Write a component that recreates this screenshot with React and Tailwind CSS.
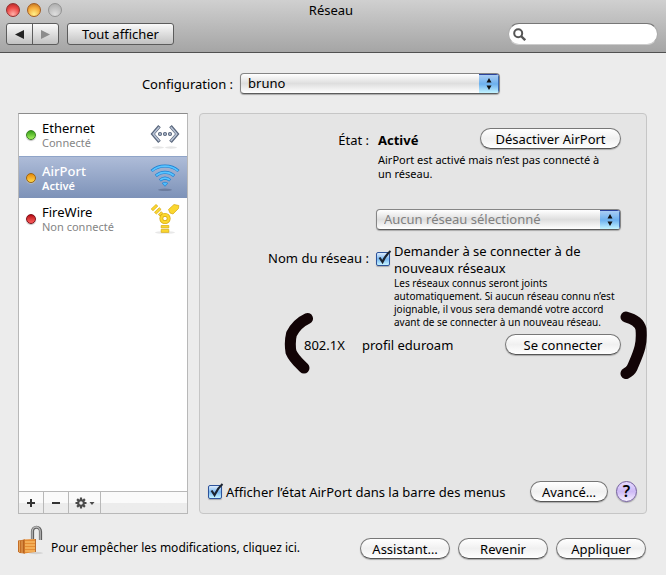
import React, { useState } from "react";
import clsx from "clsx";

const EthernetIcon = () => (
    <svg className="w-[30px] h-[30px] shrink-0" viewBox="0 0 30 30" fill="none">
        <ellipse cx="8" cy="27.500" rx="6" ry="1.200" fill="#e6e6e6" />
        <ellipse cx="21" cy="27.500" rx="6" ry="1.200" fill="#e6e6e6" />
        <g stroke="#59667c" strokeWidth="3.400">
            <path d="M9.500 6.200 2.800 14l6.700 7.800" />
            <path d="M20.500 6.200 27.200 14l-6.700 7.800" />
        </g>
        <g stroke="#b9c4d6" strokeWidth="1.500">
            <path d="M9.200 7 3.200 14l6 7" />
            <path d="M20.800 7 26.800 14l-6 7" />
        </g>
        <g fill="#b9c4d6" stroke="#59667c" strokeWidth="1.100">
            <circle cx="10" cy="14" r="1.500" />
            <circle cx="15" cy="14" r="1.500" />
            <circle cx="20" cy="14" r="1.500" />
        </g>
    </svg>
);

const AirPortIcon = () => (
    <svg className="w-[30px] h-[30px] shrink-0" viewBox="0 0 30 30" fill="none">
        <ellipse cx="15" cy="26.800" rx="7" ry="1.300" fill="#6c7d9f" />
        <g stroke="#1b7fd2" strokeWidth="3">
            <path d="M1.500 8C9 1.300 21 1.300 28.500 8" />
            <path d="M5.800 12.800c5.400-4.700 13-4.700 18.400 0" />
            <path d="M9.800 17.300c3.200-2.700 7.200-2.700 10.400 0" />
        </g>
        <g stroke="#58c4ff" strokeWidth="1.700">
            <path d="M2 7.800C9.500 1.600 20.500 1.600 28 7.800" />
            <path d="M6.200 12.500c5.200-4.300 12.400-4.300 17.600 0" />
            <path d="M10.200 17c3-2.400 6.600-2.400 9.600 0" />
        </g>
        <path d="M12.200 20.200c1.900-1.200 3.700-1.200 5.600 0L15 23.300z" fill="#4fbdfc" stroke="#1b7fd2" strokeWidth="0.700" />
    </svg>
);

const FireWireIcon = () => (
    <svg className="w-[30px] h-[32px] shrink-0" viewBox="0 0 30 32" fill="none">
        <ellipse cx="15" cy="29.500" rx="10" ry="1.300" fill="#e8e8e8" />
        <g fill="#fbd72f" stroke="#d6a80f" strokeWidth="0.700">
            <path d="m18.500 6.500 5.500-5 4.800 1L28.500 5.500 23 11l-3-1z" />
            <path d="M1.200 6 6 1.500l1.800 1.600L3 7.700z" />
            <path d="m4.500 9.300 4.800-4.600 1.800 1.700-4.800 4.600z" />
            <path d="m8.300 11.500 3-2.800 1.500 1.500-2.800 2.700z" />
            <path d="M11.200 22.500h7.600v2.400h-7.600z" />
            <path d="M11.200 26.400h7.600v3h-7.600z" />
        </g>
        <circle cx="15" cy="15.500" r="3.700" stroke="#d6a80f" strokeWidth="3.800" />
        <circle cx="15" cy="15.500" r="3.700" stroke="#fbd72f" strokeWidth="2.400" />
    </svg>
);

const LockIcon = () => (
    <svg className="w-7 h-[30px] shrink-0" viewBox="0 0 28 30" fill="none">
        <ellipse cx="18" cy="28" rx="7" ry="1.200" fill="#d3d3d3" />
        <path d="M14.500 14V6.500C14.500 .8 22.500 .8 22.500 6.500V15" stroke="#5f5f5f" strokeWidth="3.200" />
        <path d="M14.200 14V6.500C14.200 .5 22.200 .5 22.200 6.500V15" stroke="#b8b8b8" strokeWidth="1.300" />
        <path d="M0 15.500 7 14.500V28.500L1.500 28 0 26.500z" fill="#c46d25" />
        <path d="M1.500 16v11M4 15.500v12.500" stroke="#e6a45c" />
        <path d="M6 14.500 17.500 14v13L6 28.500z" fill="#e58c33" />
        <path d="M7 17h10M7 20h10M7 23h10M7 26h10" stroke="#f8b863" strokeWidth="1.300" />
        <path d="M6 14.500v14M17.500 14v13" stroke="#a8571a" strokeWidth="0.800" />
    </svg>
);

const GearIcon = () => (
    <svg className="w-[20px] h-3" viewBox="0 0 20 12">
        <g stroke="#4b4b4b" strokeWidth="2.200">
            <path d="M6 .5v11M.5 6h11M2.100 2.100l7.800 7.800M9.900 2.100 2.100 9.900" />
        </g>
        <circle cx="6" cy="6" r="3.800" fill="#4b4b4b" />
        <circle cx="6" cy="6" r="1.800" fill="#efefef" />
        <path d="M14.500 5h5L17 8z" fill="#4b4b4b" />
    </svg>
);

const services = [
    { name: "Ethernet", status: "Connecté", dot: "from-[#2d9e10] to-[#a4f35e] border-[#3b8022]", Icon: EthernetIcon },
    { name: "AirPort", status: "Activé", dot: "from-[#e88a00] to-[#ffd94a] border-[#9c6410]", Icon: AirPortIcon },
    { name: "FireWire", status: "Non connecté", dot: "from-[#b80012] to-[#ff5d5d] border-[#7d1018]", Icon: FireWireIcon },
];

const PillButton = ({ className, children }) => (
    <button
        type="button"
        className={clsx(
            "h-[21px] shrink-0 rounded-full border border-[#777] border-b-[#555] bg-linear-to-b from-white via-[#f0f0f0] to-white text-center leading-[18px] whitespace-nowrap shadow-[0_1px_1px_#aaa]",
            className
        )}
    >
        {children}
    </button>
);

const PopupSelect = ({ className, options, ...props }) => (
    <div className={clsx("relative h-[21px] overflow-hidden rounded-[4px] border border-[#858585] border-b-[#5c5c5c] bg-linear-to-b from-white via-[#dedede] to-white shadow-[0_1px_1px_#aaa]", className)}>
        <select className="block w-full h-full appearance-none pl-[7px] pr-6 leading-[19px] outline-none" {...props}>
            {options.map((option) => (
                <option key={option}>{option}</option>
            ))}
        </select>
        <span className="pointer-events-none absolute inset-y-0 right-0 flex w-5 items-center justify-center border-t border-r border-t-[#2b439c] border-r-[#3a66ad] bg-linear-to-b from-[#a9cdf3] via-[#6cb0ee] to-[#c4f4ff]">
            <svg className="w-[6px] h-3" viewBox="0 0 6 12">
                <path d="M3 0 5.500 4.500h-5zM3 12 .5 7.500h5z" fill="#111" />
            </svg>
        </span>
    </div>
);

const CheckBox = (props) => (
    <span className="relative block h-[14px] w-[14px] shrink-0">
        <input
            type="checkbox"
            defaultChecked
            className="peer block h-[14px] w-[14px] appearance-none rounded-[2px] border border-[#2d539b] bg-linear-to-b from-[#dcebfc] via-[#7ab8f0] to-[#c6f4ff] shadow-[0_1px_1px_#aaa]"
            {...props}
        />
        <svg className="pointer-events-none invisible absolute -top-[2px] left-0 h-4 w-4 peer-checked:visible" viewBox="0 0 16 16" fill="none">
            <path d="M3.500 7.500 6.500 12C8.500 7.500 11 4 14.500 1" stroke="#1c2430" strokeWidth="2.200" />
        </svg>
    </span>
);

const App = () => {
    const [selected, setSelected] = useState("AirPort");

    return (
        <div className="flex min-h-screen flex-col bg-[#ececec] font-['Lucida_Grande','Noto_Sans',sans-serif] text-[13px] leading-4 text-black">
            <header className="border-b border-[#515151] bg-linear-to-b from-[#d0d0d0] to-[#a5a5a5] px-[6px] pb-[7px]">
                <div className="grid h-[23px] grid-cols-[1fr_auto_1fr] items-center pr-1 pb-[3px]">
                    <div className="flex gap-[7px]">
                        <button type="button" aria-label="Fermer" className="h-[14px] w-[14px] rounded-full border border-[#913030] bg-[radial-gradient(circle_at_50%_85%,#ffb0a8,#ee4a48_55%,#a92222)]" />
                        <button type="button" aria-label="Réduire" className="h-[14px] w-[14px] rounded-full border border-[#a55d20] bg-[radial-gradient(circle_at_50%_85%,#fff08a,#f5ac3c_55%,#b86a1c)]" />
                        <button type="button" aria-label="Agrandir" className="h-[14px] w-[14px] rounded-full border border-[#929292] bg-[radial-gradient(circle_at_50%_85%,#dedede,#c0c0c0_55%,#a8a8a8)]" />
                    </div>
                    <h1>Réseau</h1>
                </div>
                <div className="flex h-[22px] items-stretch">
                    <div className="mr-2 flex w-[53px] rounded-[3px] border border-[#5c5c5c] bg-linear-to-b from-[#fafafa] to-[#c2c2c2]">
                        <button type="button" aria-label="Précédent" className="flex flex-1 items-center justify-center border-r border-[#5c5c5c]">
                            <svg className="h-[9px] w-[9px]" viewBox="0 0 9 9"><path d="M9 0v9L0 4.500z" fill="#222" /></svg>
                        </button>
                        <button type="button" aria-label="Suivant" className="flex flex-1 items-center justify-center">
                            <svg className="h-[9px] w-[9px]" viewBox="0 0 9 9"><path d="M0 0v9l9-4.500z" fill="#8c8c8c" /></svg>
                        </button>
                    </div>
                    <button type="button" className="w-[107px] rounded-[3px] border border-[#5c5c5c] bg-linear-to-b from-[#fafafa] to-[#c2c2c2] leading-5">
                        Tout afficher
                    </button>
                    <label className="mr-[2px] ml-auto flex w-[150px] items-center rounded-full border border-t-[#777] border-x-[#aaa] border-b-[#ccc] bg-white pl-1">
                        <svg className="h-[13px] w-[13px] shrink-0" viewBox="0 0 13 13" fill="none" stroke="#555" strokeWidth="2">
                            <circle cx="5.200" cy="5.200" r="4" />
                            <path d="m8 8 4.200 4.200" strokeWidth="2.400" />
                        </svg>
                        <input type="search" aria-label="Rechercher" className="w-full min-w-0 px-1 outline-none" />
                    </label>
                </div>
            </header>

            <main className="flex flex-1 flex-col pt-5 pr-[19px] pl-[18px]">
                <div className="flex items-center justify-center pr-[23px]">
                    <label htmlFor="location" className="mr-[7px]">Configuration :</label>
                    <PopupSelect id="location" className="w-[260px]" options={["bruno"]} />
                </div>

                <div className="mt-[19px] flex flex-1 gap-[11px]">
                    <aside className="flex w-[170px] shrink-0 flex-col border border-[#b8b8b8] border-t-[#8c8c8c] bg-white">
                        <ul className="flex-1">
                            {services.map(({ name, status, dot, Icon }) => (
                                <li key={name}>
                                    <button
                                        type="button"
                                        onClick={() => setSelected(name)}
                                        className={clsx(
                                            "flex h-[42px] w-full items-center pr-[7px] pl-[7px] text-left",
                                            selected === name && "border-t border-[#8fa4c8] bg-linear-to-b from-[#aebcd8] to-[#7d92b8] text-white"
                                        )}
                                    >
                                        <span className={clsx("h-[10px] w-[10px] shrink-0 rounded-full border bg-linear-to-b shadow-[0_1px_1px_#bbb]", dot)} />
                                        <span className="ml-[6px] flex-1">
                                            <span className={clsx("block leading-4", selected === name && "font-medium")}>{name}</span>
                                            <span className={clsx("block text-[11px] leading-[14px]", selected === name ? "font-semibold" : "text-[#858585]")}>{status}</span>
                                        </span>
                                        <Icon />
                                    </button>
                                </li>
                            ))}
                        </ul>
                        <div className="flex h-[22px] border-t border-[#b8b8b8] bg-linear-to-b from-[#fafafa] from-50% to-[#ececec] to-50%">
                            <button type="button" aria-label="Ajouter" className="flex w-[25px] items-center justify-center border-r border-[#b8b8b8]">
                                <svg className="h-2 w-2" viewBox="0 0 8 8"><path d="M4 0v8M0 4h8" stroke="#333" strokeWidth="2" /></svg>
                            </button>
                            <button type="button" aria-label="Supprimer" className="flex w-[25px] items-center justify-center border-r border-[#b8b8b8]">
                                <svg className="h-2 w-2" viewBox="0 0 8 8"><path d="M0 4h8" stroke="#333" strokeWidth="2" /></svg>
                            </button>
                            <button type="button" aria-label="Actions" className="flex w-8 items-center justify-center border-r border-[#b8b8b8]">
                                <GearIcon />
                            </button>
                        </div>
                    </aside>

                    <section className="flex min-w-0 flex-1 flex-col justify-between rounded-[4px] border border-[#c6c6c6] bg-[#e5e5e5] pr-[9px] pb-[11px] pl-2">
                        <div className="pt-[14px] pr-4">
                            <div className="grid grid-cols-[161px_1fr] gap-x-[7px]">
                                <span className="pt-1 text-right">État :</span>
                                <div className="pl-[2px]">
                                    <div className="flex items-start justify-between">
                                        <strong className="pt-1">Activé</strong>
                                        <PillButton className="w-[141px]">Désactiver AirPort</PillButton>
                                    </div>
                                    <p className="mt-1 pr-3 text-[11px] leading-[14px]">AirPort est activé mais n’est pas connecté à un réseau.</p>
                                </div>

                                <PopupSelect
                                    className="col-start-2 mt-7 text-[#808080]"
                                    aria-label="Réseau"
                                    options={["Aucun réseau sélectionné"]}
                                />

                                <span className="mt-5 text-right">Nom du réseau :</span>
                                <div className="mt-[13px] flex gap-1">
                                    <div className="pt-[9px]">
                                        <CheckBox id="ask-join" />
                                    </div>
                                    <div>
                                        <label htmlFor="ask-join" className="block leading-[17px]">Demander à se connecter à de nouveaux réseaux</label>
                                        <p className="text-[10px] leading-[13px]">
                                            Les réseaux connus seront joints automatiquement. Si aucun réseau connu n’est joignable, il vous sera demandé votre accord avant de se connecter à un nouveau réseau.
                                        </p>
                                    </div>
                                </div>
                            </div>

                            <div className="relative mt-[5px] flex items-center pl-24">
                                <span className="w-[58px]">802.1X</span>
                                <span>profil eduroam</span>
                                <PillButton className="ml-auto w-[116px]">Se connecter</PillButton>
                                {/* hand-drawn brackets round the 802.1X row */}
                                <svg className="pointer-events-none absolute -top-[22px] left-[74px] h-[64px] w-9" viewBox="0 0 36 64" fill="none">
                                    <path d="M25.500 6.500C18 10 13 15 9.500 22c-1.500 6-1.500 12-.5 18C12 47 16 50 22 56" stroke="#120406" strokeWidth="11" strokeLinecap="round" strokeLinejoin="round" />
                                </svg>
                                <svg className="pointer-events-none absolute -top-[24px] -right-[26px] h-[70px] w-8" viewBox="0 0 32 70" fill="none">
                                    <path d="M11 7c6 1.500 13 4 15 12 .5 6 .5 12-1 18-2 8-5 14-8 21-1 2-3 4-6 5.500" stroke="#120406" strokeWidth="11" strokeLinecap="round" strokeLinejoin="round" />
                                </svg>
                            </div>
                        </div>

                        <div className="flex items-center">
                            <CheckBox id="menu-bar" />
                            <label htmlFor="menu-bar" className="ml-1 whitespace-nowrap">Afficher l’état AirPort dans la barre des menus</label>
                            <PillButton className="ml-auto w-[78px]">Avancé…</PillButton>
                            <button type="button" aria-label="Aide" className="ml-2 h-[21px] w-[21px] shrink-0 rounded-full border border-[#74609f] bg-linear-to-b from-[#e6daff] via-[#cdb9f5] to-[#f7f0ff] text-[16px] leading-[19px] font-semibold shadow-[0_1px_1px_#aaa]">
                                ?
                            </button>
                        </div>
                    </section>
                </div>

                <footer className="flex h-[61px] items-start pt-[11px]">
                    <button type="button" aria-label="Verrou">
                        <LockIcon />
                    </button>
                    <p className="ml-[5px] pt-[15px] text-[12px]">Pour empêcher les modifications, cliquez ici.</p>
                    <div className="mr-[1px] ml-auto flex gap-2 pt-[13px]">
                        <PillButton className="w-[90px]">Assistant…</PillButton>
                        <PillButton className="w-[90px]">Revenir</PillButton>
                        <PillButton className="w-[90px]">Appliquer</PillButton>
                    </div>
                </footer>
            </main>
        </div>
    );
};

export default App;
